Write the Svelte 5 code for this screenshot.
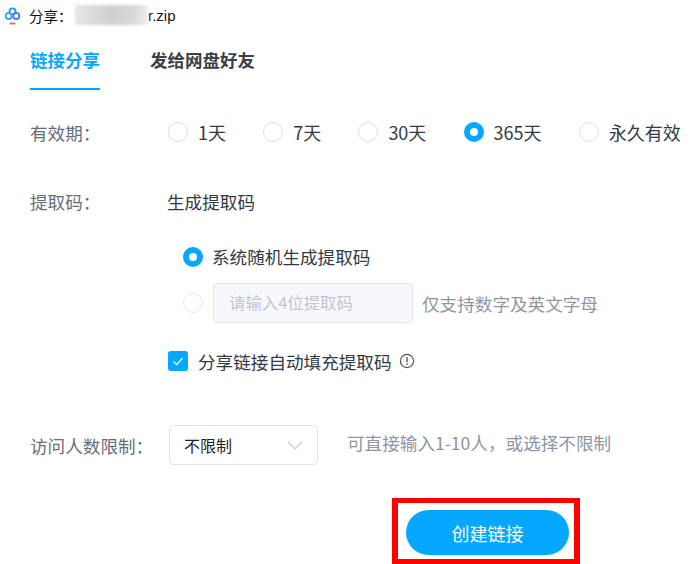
<script>
    const periods = [
        { label: "1天" },
        { label: "7天" },
        { label: "30天" },
        { label: "365天", checked: true },
        { label: "永久有效" },
    ];
</script>

<div class="share-dialog">
    <!-- Title bar -->
    <div class="title-bar">
        <span class="logo-box">
            <svg viewBox="0 0 18 20" width="18" height="20">
                <circle cx="9" cy="6.2" r="3.2" fill="none" stroke="#2f8ff0" stroke-width="2" />
                <circle cx="5" cy="11" r="3.2" fill="none" stroke="#2fa8f5" stroke-width="2" />
                <circle cx="13" cy="11" r="3.2" fill="none" stroke="#3f7cf0" stroke-width="2" />
                <path d="M9 9.2 L10.6 11.4 H7.4 Z" fill="#ee6a78" />
                <rect x="6" y="18" width="6" height="2" fill="#ee5f6c" />
            </svg>
        </span>
        <span class="title-text">分享&#65306;</span>
        <span class="file-blur"></span>
        <span class="file-ext">r.zip</span>
    </div>

    <!-- Tabs -->
    <div class="tabs">
        <div class="tab active">链接分享</div>
        <div class="tab">发给网盘好友</div>
    </div>

    <!-- Validity -->
    <div class="row period-row">
        <span class="label">有效期&#65306;</span>
        <div class="periods">
            {#each periods as p}
                <div class="radio-item">
                    <span class="radio" class:on={p.checked}></span>
                    <span>{p.label}</span>
                </div>
            {/each}
        </div>
    </div>

    <!-- Extraction code -->
    <div class="row code-row">
        <span class="label">提取码&#65306;</span>
        <span>生成提取码</span>
    </div>
    <div class="code-options">
        <div class="radio-item tight">
            <span class="radio on"></span>
            <span>系统随机生成提取码</span>
        </div>
        <div class="custom-code">
            <span class="radio faint"></span>
            <div class="code-input">请输入4位提取码</div>
            <span class="hint">仅支持数字及英文字母</span>
        </div>
    </div>
    <div class="auto-fill">
        <span class="checkbox">
            <svg viewBox="0 0 20 20" width="20" height="20">
                <path d="M5.5 10.5 L8.8 13.6 L14.5 7" fill="none" stroke="#fff" stroke-width="1.2" />
            </svg>
        </span>
        <span>分享链接自动填充提取码</span>
        <svg class="info" viewBox="0 0 16 16" width="16" height="16">
            <circle cx="8" cy="8" r="6.6" fill="none" stroke="#555" stroke-width="1.2" />
            <path d="M8 4.2 V9.2 M8 10.6 V12" stroke="#555" stroke-width="1.4" />
        </svg>
    </div>

    <!-- Visitor limit -->
    <div class="row limit-row">
        <span class="label">访问人数限制&#65306;</span>
        <div class="select">
            <span>不限制</span>
            <svg viewBox="0 0 16 9" width="16" height="9">
                <path d="M1 1 L8 8 L15 1" fill="none" stroke="#c4c8d0" stroke-width="1.2" />
            </svg>
        </div>
        <span class="hint small">可直接输入1-10人&#65292;或选择不限制</span>
    </div>

    <!-- Footer -->
    <div class="footer">
        <div class="highlight">
            <button class="create">创建链接</button>
        </div>
    </div>
</div>

<style>
    :global(body) {
        margin: 0;
        background: #fff;
    }

    .share-dialog {
        width: 697px;
        height: 564px;
        overflow: hidden;
        font-family: "Noto Sans CJK SC", "Noto Sans", sans-serif;
        font-size: 17.6px;
        color: #333a45;
    }

    /* Title bar */
    .title-bar {
        display: flex;
        align-items: center;
        height: 30px;
        padding-left: 3px;
        font-size: 14.5px;
        color: #111;
    }

    .logo-box {
        width: 19px;
        height: 20px;
        margin-right: 7px;
        margin-top: -3px;
        box-sizing: border-box;
        display: flex;
        justify-content: center;
        border: 1px solid #f3f3f5;
        border-bottom: 0;
        border-radius: 2px;
    }

    .title-text {
        width: 46px;
    }

    .file-blur {
        width: 73px;
        height: 20px;
        background: linear-gradient(90deg, #e6e6e6, #cfcfcf 50%, #d8d8d8 80%, #eee);
        filter: blur(1.5px);
    }

    .file-ext {
        font-family: "Liberation Sans", sans-serif;
        font-size: 15px;
    }

    /* Tabs */
    .tabs {
        display: flex;
        gap: 50px;
        padding-left: 30px;
        height: 61px;
    }

    .tab {
        font-size: 17.5px;
        font-weight: 700;
        color: #3b3f46;
        padding-top: 17px;
        box-sizing: border-box;
        height: 60px;
    }

    .active {
        color: #06a7ff;
        border-bottom: 2px solid #06a7ff;
    }

    .row {
        display: flex;
        align-items: center;
        padding-left: 30px;
    }

    .label {
        width: 138px;
        color: #666e7a;
        flex-shrink: 0;
    }

    .period-row {
        margin-top: 25px;
        height: 32px;
    }

    .periods {
        display: flex;
        gap: 37.2px;
        font-size: 18px;
    }

    .radio-item {
        display: flex;
        align-items: center;
        gap: 10px;
    }

    .tight {
        gap: 9px;
    }

    .radio {
        width: 20px;
        height: 20px;
        box-sizing: border-box;
        border: 1px solid #dcdfe8;
        border-radius: 50%;
        background: #fff;
        flex-shrink: 0;
    }

    .radio.on {
        border: 6px solid #06a7ff;
    }

    .code-row {
        margin-top: 37px;
        height: 32px;
    }

    .code-row .label {
        width: 137px;
    }

    .code-options {
        padding-left: 183px;
        margin-top: 27px;
    }

    .custom-code {
        display: flex;
        align-items: center;
        margin-top: 14px;
    }

    .faint {
        opacity: 0.8;
    }

    .code-input {
        width: 200px;
        height: 40px;
        box-sizing: border-box;
        margin-left: 10px;
        margin-right: 9px;
        padding-left: 15px;
        border: 1px solid #e4e6ee;
        border-radius: 4px;
        background: #f7f8fc;
        color: #c3c6cf;
        font-size: 16.4px;
        line-height: 36px;
    }

    .hint {
        color: #8e96a4;
    }

    .small {
        margin-left: 29px;
        margin-top: -6px;
    }

    .auto-fill {
        display: flex;
        align-items: center;
        padding-left: 168px;
        margin-top: 22px;
        height: 32px;
    }

    .checkbox {
        width: 20px;
        height: 20px;
        border-radius: 3px;
        background: #06a7ff;
        margin-right: 10px;
    }

    .checkbox svg {
        display: block;
    }

    .info {
        margin-left: 7px;
    }

    .limit-row {
        margin-top: 48px;
    }

    .limit-row .label {
        width: 139px;
    }

    .select {
        width: 149px;
        height: 40px;
        box-sizing: border-box;
        display: flex;
        align-items: center;
        justify-content: space-between;
        padding: 0 14px;
        border: 1px solid #e0e2ea;
        border-radius: 5px;
        font-size: 16px;
        color: #222;
    }

    .footer {
        display: flex;
        justify-content: flex-end;
        padding-right: 117px;
        margin-top: 33px;
    }

    .highlight {
        border: 6px solid #f00;
        border-top-width: 5px;
        padding: 7px 5px 4px 8px;
    }

    .create {
        display: block;
        width: 163px;
        height: 45px;
        border: 0;
        border-radius: 23px;
        background: #06a7ff;
        color: #fff;
        font-family: inherit;
        font-size: 18px;
    }
</style>
